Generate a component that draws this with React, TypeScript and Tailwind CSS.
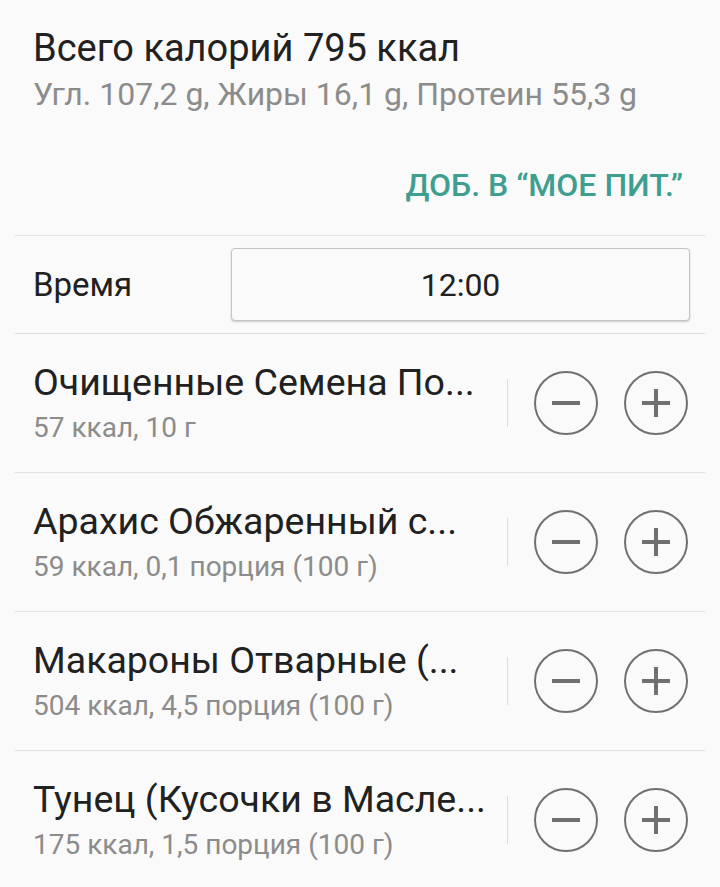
import React from "react";

type Item = {
  name: string;
  info: string;
};

const items: Item[] = [
  { name: "Очищенные Семена По...", info: "57 ккал, 10 г" },
  { name: "Арахис Обжаренный с...", info: "59 ккал, 0,1 порция (100 г)" },
  { name: "Макароны Отварные (...", info: "504 ккал, 4,5 порция (100 г)" },
  { name: "Тунец (Кусочки в Масле...", info: "175 ккал, 1,5 порция (100 г)" },
];

const CircleBtn = ({ plus }: { plus?: boolean }) => (
  <button className="w-[64px] h-[64px] rounded-full border-2 border-[#707070] flex items-center justify-center">
    <svg width="32" height="32" viewBox="0 0 32 32">
      <rect x="2" y="14" width="28" height="4" fill="#707070" />
      {plus && <rect x="14" y="2" width="4" height="28" fill="#707070" />}
    </svg>
  </button>
);

const FoodRow = ({ item }: { item: Item }) => (
  <div className="flex items-center h-[139px] border-t border-[#e0e0e0] mx-[15px]">
    <div className="flex-1 min-w-0 pl-[18px] pr-2">
      <div className="text-[37.5px] leading-[46px] text-[#212121] whitespace-nowrap">{item.name}</div>
      <div className="text-[28px] leading-[38px] mt-[4px] text-[#8c8c8c] whitespace-nowrap">{item.info}</div>
    </div>
    <div className="w-px h-[48px] bg-[#dcdcdc]" />
    <div className="flex items-center gap-[26px] pl-[26px] pr-[17px]">
      <CircleBtn />
      <CircleBtn plus />
    </div>
  </div>
);

export default function App() {
  return (
    <div
      className="w-[720px] h-[887px] bg-[#fafafa] overflow-hidden"
      style={{ fontFamily: "Roboto, 'Noto Sans', sans-serif" }}
    >
      <div className="px-[33px] pt-[23px]">
        <div className="text-[38px] leading-[50px] text-[#212121]">Всего калорий 795 ккал</div>
        <div className="text-[32px] leading-[42px] text-[#8c8c8c]">
          Угл. 107,2 g, Жиры 16,1 g, Протеин 55,3 g
        </div>
      </div>
      <div className="flex justify-end pr-[37px] pt-[50px] pb-[30px]">
        <span className="text-[32px] leading-[40px] font-medium text-[#3e9e90]">ДОБ. В “МОЕ ПИТ.”</span>
      </div>
      <div className="mx-[15px] border-t border-[#e0e0e0] flex items-center h-[98px]">
        <div className="w-[216px] pl-[18px] text-[33px] text-[#212121]">Время</div>
        <div className="flex-1 mr-[15px] h-[73px] rounded-[4px] border border-[#c4c4c4] bg-[#fafafa] shadow-[0_1px_2px_rgba(0,0,0,0.2)] flex items-center justify-center text-[32px] text-[#212121]">
          12:00
        </div>
      </div>
      {items.map((it) => (
        <FoodRow key={it.name} item={it} />
      ))}
    </div>
  );
}
